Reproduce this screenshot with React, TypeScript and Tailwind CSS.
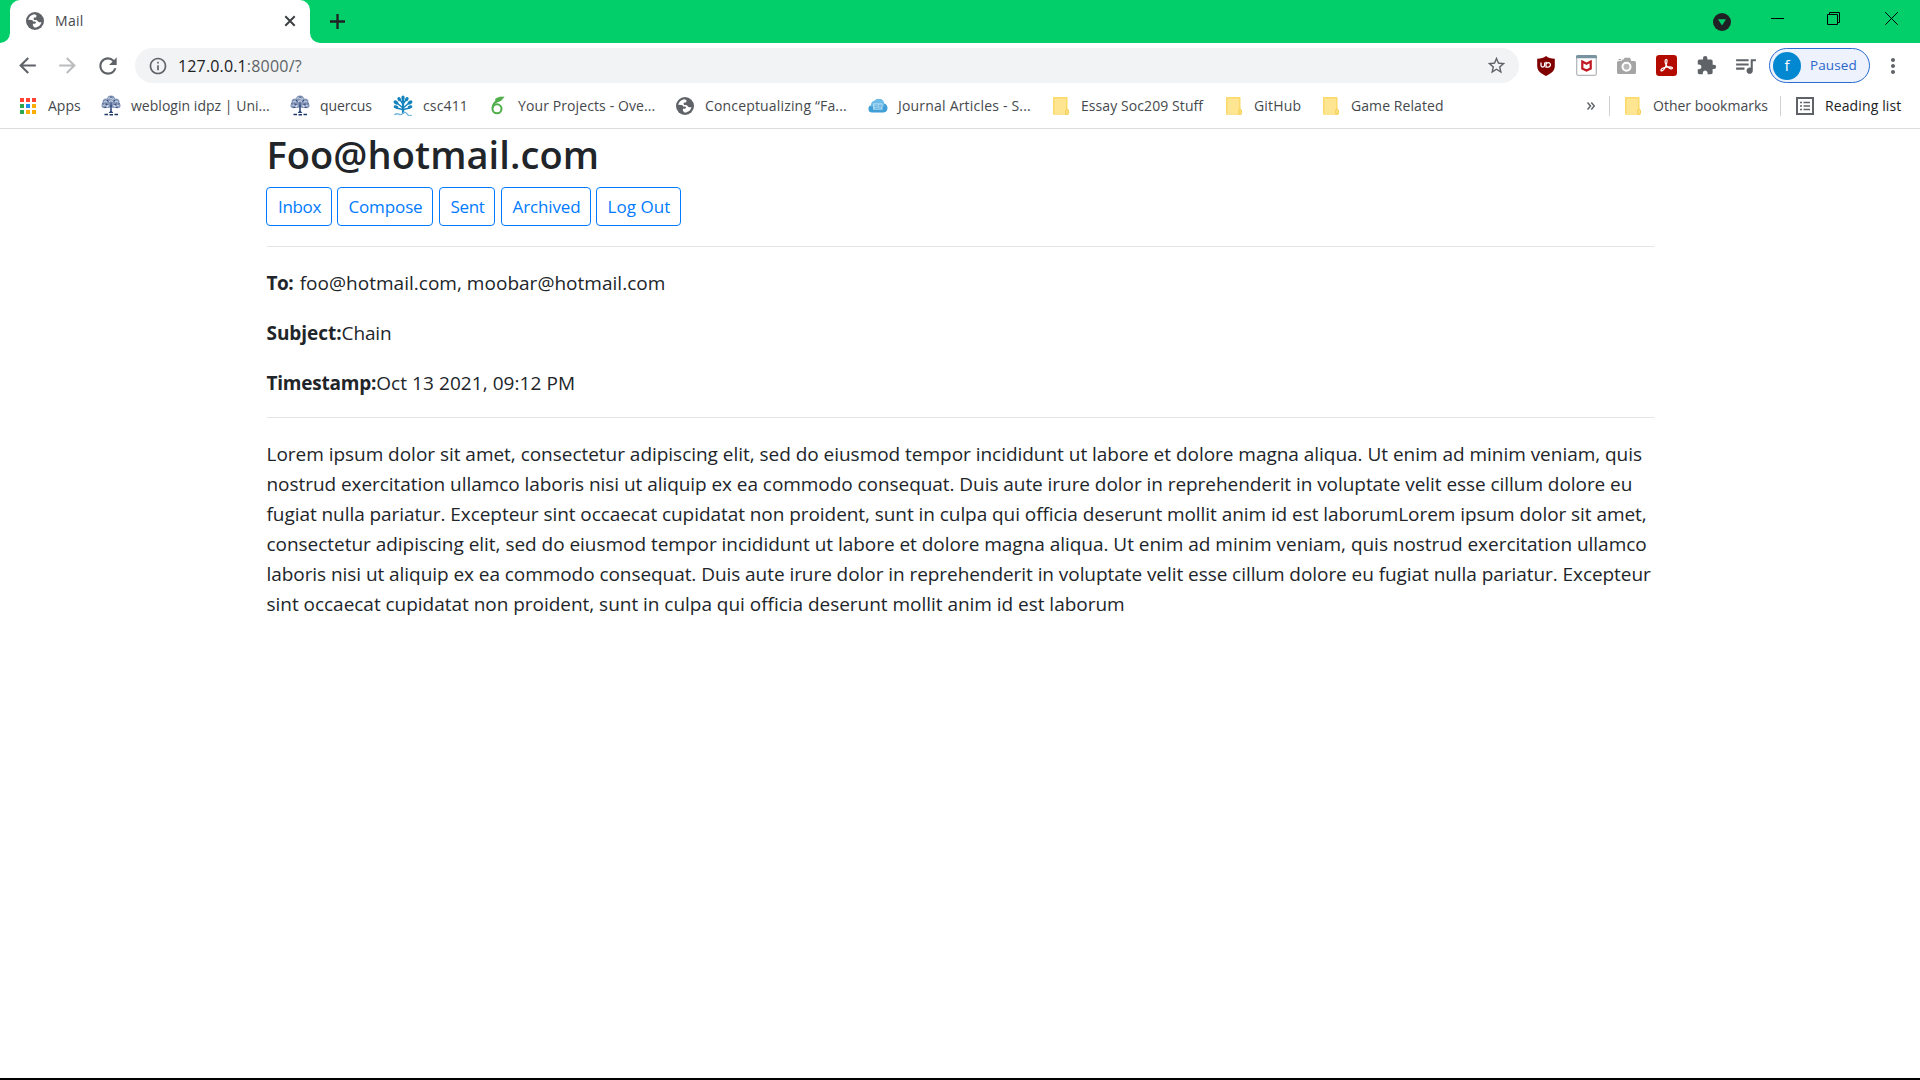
import React from "react";
import {
  MdArrowBack,
  MdArrowForward,
  MdExtension,
  MdInfoOutline,
  MdMoreVert,
  MdQueueMusic,
  MdRefresh,
  MdStarOutline,
} from "react-icons/md";

function Globe() {
  return (
    <svg width="18" height="18" viewBox="0 0 18 18">
      <circle cx="9" cy="9" r="9" fill="#5f6368" />
      <path
        d="M8.2 2.2c-3 .5-5.3 2.6-6 5.6l3.2.1c1 0 1.600.6 1.600 1.500h1.500c.9 0 1.500.5 1.500 1.200s-.6 1.200-1.500 1.200H6.900v1.900l1.500 1.700c3.500.3 6.300-2 7.100-5.200h-2.200c-.9 0-1.200-.8-1.900-1.500-.5-.5-1.400-.6-2.300-.6-.9 0-1.500-.6-1.500-1.300s.5-1.200 1.200-1.200h1.800V3.700c0-.6-.8-1.200-2.400-1.500z"
        fill="#fff"
      />
      <path d="M10.600 3.400v1.200c0 .8-.6 1.500-1.400 1.500H8v1.200h2.200c1.500 0 1.700 2 2.700 2h2.600A6.700 6.700 0 0 0 10.600 3.400z" fill="#5f6368" />
    </svg>
  );
}

function AppsGrid() {
  const colors = ["#ff4335", "#ff4335", "#ff4335", "#2aa850", "#1c8cf3", "#fbac05", "#2aa850", "#fbac05", "#fbac05"];
  return (
    <div className="grid grid-cols-[4px_4px_4px] gap-[2px]">
      {colors.map((c, i) => (
        <div key={i} className="size-[4px]" style={{ backgroundColor: c }} />
      ))}
    </div>
  );
}

function CrestTree() {
  return (
    <svg width="20" height="21" viewBox="0 0 20 21">
      <g fill="#8496b8">
        <circle cx="10" cy="4.500" r="4" />
        <circle cx="5" cy="7" r="3.500" />
        <circle cx="15" cy="7" r="3.500" />
        <circle cx="3.300" cy="10.500" r="2.800" />
        <circle cx="16.700" cy="10.500" r="2.800" />
        <circle cx="7.500" cy="10" r="3" />
        <circle cx="12.500" cy="10" r="3" />
      </g>
      <g fill="none" stroke="#e8edf5" strokeWidth=".8">
        <path d="M7 3.500q1.500-1.500 3 0t3 0M3 7q1.500-1.500 3 0M8 6.500q2-1.500 4 0M14 7q1.500-1.500 3 0M1.800 10.500q1.500-1.200 2.700 0M6 10.500q1 1 2 0M12 10.500q1 1 2 0M15.800 11q1.200-1.200 2.200 0M5 12l2-.8M13 11.200l2 .8" />
      </g>
      <g fill="none" stroke="#2a4478" strokeWidth="1">
        <path d="M6 5l1.500 1.500M10 1.500v1.300M14 5l-1.500 1.500M4.500 9l2 .5M15.500 9l-2 .5M10 7.500v3M1.500 8.500l1 .5M18.500 8.500l-1 .5M3.500 12.500h2M14.500 12.500h2" />
      </g>
      <path d="M9.300 10h1.400l.1 6 1.600 2H7.600l1.600-2z" fill="#2a4478" />
      <path d="M3.500 19.500h3.500M8.500 19.700h3.500M13.500 19.500H17" stroke="#1e3765" strokeWidth="1.600" />
    </svg>
  );
}

function BlueTree() {
  return (
    <svg width="20" height="21" viewBox="0 0 20 21">
      <g fill="none" stroke="#1683bd" strokeLinecap="round">
        <path d="M10 18V4" strokeWidth="2.200" />
        <path d="M10 13L4.500 8.500M10 13l5.500-4.500M10 9L7.500 5.500M10 9l2.500-3.500M9.500 14.500l-6-1.500M10.500 14.500l6-1.500" strokeWidth="1.500" />
      </g>
      <g fill="#1683bd">
        <ellipse cx="10" cy="3" rx="1.700" ry="2.400" />
        <ellipse cx="6.200" cy="4.200" rx="1.700" ry="2.200" transform="rotate(-30 6.200 4.200)" />
        <ellipse cx="13.800" cy="4.200" rx="1.700" ry="2.200" transform="rotate(30 13.800 4.200)" />
        <ellipse cx="3" cy="7.500" rx="1.800" ry="2.600" transform="rotate(-55 3 7.500)" />
        <ellipse cx="17" cy="7.500" rx="1.800" ry="2.600" transform="rotate(55 17 7.500)" />
        <ellipse cx="3" cy="12" rx="1.500" ry="2.400" transform="rotate(-75 3 12)" />
        <ellipse cx="17" cy="12" rx="1.500" ry="2.400" transform="rotate(75 17 12)" />
      </g>
      <path d="M1.500 20q2-2 4.200-.8T10 18.200t4.300 1T18.500 20" fill="none" stroke="#71b6d8" strokeWidth="1.400" />
    </svg>
  );
}

function Overleaf() {
  return (
    <svg width="16" height="19" viewBox="0 0 16 19" fill="none" stroke="#4fae4a">
      <circle cx="7" cy="12.800" r="4.500" strokeWidth="2" />
      <path d="M2.600 12C2.800 8 5 5.500 9 4.200" strokeWidth="2" />
      <path d="M5.200 3.200C8 .8 11 .8 14.200 1c-1.500 1-1.800 3.500-5.200 4.300-1.500.3-2.300 1-3.300 2" fill="#4fae4a" strokeWidth=".6" />
    </svg>
  );
}

function Cloud() {
  return (
    <svg width="20" height="15" viewBox="0 0 20 15">
      <path d="M4 14.500a3.700 3.700 0 0 1-.7-7.300A4 4 0 0 1 6.300 3a5.500 5.500 0 0 1 9.700 2.500c2.300.5 3.500 2.400 3.500 4.600 0 2.600-1.500 4.400-3.800 4.400z" fill="#3f9fd6" />
      <path d="M3.300 7.200A4 4 0 0 1 6.300 3a5.500 5.500 0 0 1 9.700 2.500l.3 3H2z" fill="#6bbce8" />
      <rect x="5" y="5.300" width="9.500" height="6.500" rx=".6" fill="#a9d8f2" />
      <path d="M6.500 7h3.500M6.500 8.600h3.500M6.500 10.200h6.500M11.500 7h1.700v1.600h-1.700z" stroke="#58aadb" strokeWidth=".8" fill="none" />
    </svg>
  );
}

function Folder() {
  return (
    <svg width="16" height="18" viewBox="0 0 16 18">
      <path d="M1 0h12.500a1 1 0 0 1 1 1v11l1.200 1v3.500a1 1 0 0 1-1 1.200H1a1 1 0 0 1-1-1V1a1 1 0 0 1 1-1z" fill="#fbd969" />
      <path d="M1.500 1.500h11.500V17H1.500z" fill="#fee592" />
      <path d="M12.800 17.200v-4.200q1.500-1.500 2.500 0v3.200q0 1-1 1z" fill="#fee592" stroke="#f3cb45" strokeWidth=".9" />
    </svg>
  );
}

function ReadingList() {
  return (
    <svg width="18" height="18" viewBox="0 0 18 18" fill="none" stroke="#5f6368">
      <path d="M1 1h16v16H1z" strokeWidth="2" />
      <path d="M4 5.500h2M4 9h2M4 12.500h2M7.500 5.500H14M7.500 9H14M7.500 12.500H14" strokeWidth="1.700" />
    </svg>
  );
}

function Shield() {
  return (
    <svg width="18" height="20" viewBox="0 0 18 20">
      <path d="M9 0c2.200 1.800 5 2.500 8.800 2.700v7.300c0 4.800-3.700 7.600-8.800 10C3.900 17.600.2 14.800.2 10V2.700C4 2.500 6.800 1.800 9 0z" fill="#800000" />
      <path d="M4 6.500v2.800a1.800 1.800 0 0 0 3.600 0V6.500" stroke="#fff" strokeWidth="1.300" fill="none" />
      <path d="M9 5.800v5.300h2a2.200 2.200 0 1 0-2-2.200" stroke="#fff" strokeWidth="1.300" fill="none" />
    </svg>
  );
}

function McAfee() {
  return (
    <svg width="21" height="21" viewBox="0 0 21 21">
      <rect x=".7" y=".7" width="19.600" height="19.600" rx="1.500" fill="#fff" stroke="#b4b8bb" strokeWidth="1.300" />
      <path d="M1.500 0h18a1.500 1.500 0 0 1 1.500 1.500V3.300H0V1.500A1.500 1.500 0 0 1 1.500 0z" fill="#7893a0" />
      <path d="M6.300 6.500l4.200 2.300 4.200-2.300v7l-4.200 2-4.200-2z" fill="none" stroke="#c01722" strokeWidth="2.200" />
    </svg>
  );
}

function Camera() {
  return (
    <svg width="19" height="18" viewBox="0 0 19 18">
      <path d="M1.500 4h3.300V2.500h2L7.500.8h5.500L14.200 4h3.300A1.500 1.500 0 0 1 19 5.500v10a1.500 1.500 0 0 1-1.500 1.500h-16A1.500 1.500 0 0 1 0 15.500v-10A1.500 1.500 0 0 1 1.500 4z" fill="#a5a5a5" />
      <path d="M1.500 2h2.500v1.200H1.500z" fill="#a5a5a5" />
      <circle cx="9.500" cy="9.800" r="4" fill="#b9b9b9" stroke="#fff" strokeWidth="2" />
    </svg>
  );
}

function Acrobat() {
  return (
    <svg width="21" height="21" viewBox="0 0 21 21">
      <rect width="21" height="21" rx="3.300" fill="#b30b00" />
      <path
        d="M10 4.500c1.300-.3 1.200 2 .5 4.300-.8 2.800-2.700 6.200-4.200 7-1 .5-1.800-.3-1.200-1.200.9-1.300 4.500-2.500 7.500-2.700 2.200-.1 4 .4 3.900 1.300-.2 1.100-2.400.7-4-.6-2-1.600-3.600-4.600-3.400-6.700.1-.8.4-1.300.9-1.400z"
        fill="none"
        stroke="#fff"
        strokeWidth="1.200"
      />
    </svg>
  );
}

const bookmarks = [
  { icon: <AppsGrid />, text: "Apps", width: "w-[83px]", spacing: "tracking-normal" },
  { icon: <CrestTree />, text: "weblogin idpz | Uni...", width: "w-[189px]", spacing: "tracking-[0.026px]" },
  { icon: <CrestTree />, text: "quercus", width: "w-[103px]", spacing: "tracking-[-0.120px]" },
  { icon: <BlueTree />, text: "csc411", width: "w-[95px]", spacing: "tracking-[0.150px]" },
  { icon: <Overleaf />, text: "Your Projects - Ove...", width: "w-[187px]", spacing: "tracking-[0.105px]" },
  { icon: <Globe />, text: "Conceptualizing “Fa...", width: "w-[193px]", spacing: "tracking-[0.165px]" },
  { icon: <Cloud />, text: "Journal Articles - S...", width: "w-[183px]", spacing: "tracking-[0.200px]" },
  { icon: <Folder />, text: "Essay Soc209 Stuff", width: "w-[173px]", spacing: "tracking-[0.080px]" },
  { icon: <Folder />, text: "GitHub", width: "w-[97px]", spacing: "tracking-[0.178px]" },
  { icon: <Folder />, text: "Game Related", width: "w-[130px]", spacing: "tracking-[0.080px]" },
];

const actions = [
  { text: "Inbox", style: "w-[66px] mr-[5px] tracking-[-0.350px]" },
  { text: "Compose", style: "w-[96px] mr-[6px] tracking-[-0.117px]" },
  { text: "Sent", style: "w-[56px] mr-[6px] tracking-[-0.400px]" },
  { text: "Archived", style: "w-[90px] mr-[5px] tracking-[-0.142px]" },
  { text: "Log Out", style: "w-[85px] tracking-[0.051px]" },
];

const body = [
  { text: "Lorem ipsum dolor sit amet, consectetur adipiscing elit, sed do eiusmod tempor incididunt ut labore et dolore magna aliqua. Ut enim ad minim veniam, quis", spacing: "tracking-[-0.029px]" },
  { text: "nostrud exercitation ullamco laboris nisi ut aliquip ex ea commodo consequat. Duis aute irure dolor in reprehenderit in voluptate velit esse cillum dolore eu", spacing: "tracking-[-0.056px]" },
  { text: "fugiat nulla pariatur. Excepteur sint occaecat cupidatat non proident, sunt in culpa qui officia deserunt mollit anim id est laborumLorem ipsum dolor sit amet,", spacing: "tracking-[-0.061px]" },
  { text: "consectetur adipiscing elit, sed do eiusmod tempor incididunt ut labore et dolore magna aliqua. Ut enim ad minim veniam, quis nostrud exercitation ullamco", spacing: "tracking-[-0.029px]" },
  { text: "laboris nisi ut aliquip ex ea commodo consequat. Duis aute irure dolor in reprehenderit in voluptate velit esse cillum dolore eu fugiat nulla pariatur. Excepteur", spacing: "tracking-[-0.060px]" },
  { text: "sint occaecat cupidatat non proident, sunt in culpa qui officia deserunt mollit anim id est laborum", spacing: "tracking-[-0.028px]" },
];

function TabStrip() {
  return (
    <div className="flex h-[43px] bg-[#02cf6a]">
      <div className="w-[10px] bg-white">
        <div className="h-full rounded-br-[10px] bg-[#02cf6a]" />
      </div>
      <div className="bg-[#02cf6a]">
        <div className="flex h-[43px] w-[300px] items-center rounded-t-[10px] bg-white pb-[2px] pl-[16px] pr-[14px]">
          <Globe />
          <span className="ml-[11px] text-[14px] leading-[20px] tracking-[0.300px] text-[#45494d]">Mail</span>
          <svg className="ml-auto" width="12" height="12" viewBox="0 0 12 12" stroke="#3c4043" strokeWidth="2">
            <path d="M1.300 1.300l9.400 9.400M10.700 1.300L1.300 10.700" />
          </svg>
        </div>
      </div>
      <div className="flex-1 bg-white">
        <div className="flex h-full items-center rounded-bl-[10px] bg-[#02cf6a] pl-[20px] pr-[22px]">
          <svg className="-mt-[1px]" width="15" height="15" viewBox="0 0 15 15" stroke="#202124" strokeWidth="2.300">
            <path d="M7.500 0v15M0 7.500h15" />
          </svg>
          <svg className="ml-auto" width="18" height="18" viewBox="0 0 18 18">
            <circle cx="9" cy="9" r="9" fill="#202124" />
            <path d="M5 6.200h8L9 12.500z" fill="#02cf6a" />
          </svg>
          <svg className="-mt-[6px] ml-[40px]" width="13" height="13" viewBox="0 0 13 13" stroke="#000">
            <path d="M0 6.500h13" />
          </svg>
          <svg className="-mt-[6px] ml-[43px]" width="13" height="13" viewBox="0 0 13 13" stroke="#000" fill="none">
            <path d="M.5 2.500h10v10H.5zM2.500 2.500v-2h10v10h-2" />
          </svg>
          <svg className="-mt-[6px] ml-[45px]" width="13" height="13" viewBox="0 0 13 13" stroke="#000">
            <path d="M.2.200l12.600 12.600M12.800.2L.2 12.800" />
          </svg>
        </div>
      </div>
    </div>
  );
}

function Toolbar() {
  return (
    <div className="flex h-[44px] items-center pl-[15px] pr-[15px] pt-px text-[#5f6368]">
      <MdArrowBack size={25} />
      <MdArrowForward size={25} className="ml-[15px] text-[#babcbe]" />
      <MdRefresh size={26} className="ml-[15px]" />
      <div className="ml-[14px] flex h-[35px] w-[1384px] items-center rounded-full bg-[#f1f3f4] pl-[13px] pr-[12px]">
        <MdInfoOutline size={20} />
        <span className="ml-[10px] text-[16px] leading-[22px] tracking-[0.150px] text-[#202124]">127.0.0.1</span>
        <span className="text-[16px] leading-[22px] tracking-[0.200px]">:8000/?</span>
        <MdStarOutline size={21} className="ml-auto" />
      </div>
      <div className="ml-[18px] flex items-center">
        <Shield />
        <div className="ml-[21px]"><McAfee /></div>
        <div className="ml-[20px]"><Camera /></div>
        <div className="ml-[20px]"><Acrobat /></div>
        <MdExtension size={21} className="ml-[19px]" />
        <MdQueueMusic size={25} className="ml-[16px]" />
      </div>
      <div className="ml-auto flex h-[35px] w-[101px] items-center rounded-full border border-[#2a6cd0] bg-[#edf2fc] pl-[3px]">
        <div className="flex size-7 items-center justify-center rounded-full bg-[#0288d1] text-[15px] leading-none text-white">f</div>
        <span className="mb-[2px] ml-[9px] text-[13.500px] leading-[20px] tracking-[0.100px] text-[#2a66cc]">Paused</span>
      </div>
      <MdMoreVert size={24} className="ml-[11px]" />
    </div>
  );
}

function BookmarksBar() {
  return (
    <div className="flex h-[42px] items-center whitespace-nowrap border-b border-[#dadce0] pb-[4px] pl-[18px] text-[14px] leading-[20px] text-[#45494d]">
      {bookmarks.map((b, i) => (
        <div key={i} className={`flex shrink-0 items-center gap-[10px] ${b.width}`}>
          <div className="flex w-5 shrink-0 justify-center">{b.icon}</div>
          <span className={b.spacing}>{b.text}</span>
        </div>
      ))}
      <svg className="ml-[136px]" width="8" height="8" viewBox="0 0 8 8" fill="none" stroke="#5f6368" strokeWidth="1.500">
        <path d="M.5.5L3.500 4 .5 7.500M4.300.5L7.300 4l-3 3.500" />
      </svg>
      <div className="ml-[14px] h-[20px] w-px bg-[#cfd1d4]" />
      <div className="ml-[15px]"><Folder /></div>
      <span className="ml-[12px] tracking-normal">Other bookmarks</span>
      <div className="ml-[12px] h-[20px] w-px bg-[#cfd1d4]" />
      <div className="ml-[15px]"><ReadingList /></div>
      <span className="ml-[11px] tracking-[0.123px] text-[#202124]">Reading list</span>
    </div>
  );
}

function MailPage() {
  return (
    <main className="mx-auto w-[1387px] flex-1 whitespace-nowrap text-[19px] leading-[30px] text-[#212529]">
      <h2 className="mb-[9px] pt-px text-[38px] font-semibold leading-[48px] tracking-[0.080px]">Foo@hotmail.com</h2>
      <div className="-ml-px flex">
        {actions.map((a) => (
          <button key={a.text} className={`h-[39px] rounded-[4px] border border-[#007bff] pl-[2px] text-center text-[17px] leading-[26px] text-[#007bff] ${a.style}`}>
            {a.text}
          </button>
        ))}
      </div>
      <hr className="mb-[21px] mt-5 border-[#e5e5e5]" />
      <p className="mb-5">
        <b className="tracking-[-0.500px]">To:</b>
        <span className="ml-[6.500px] tracking-[0.020px]">foo@hotmail.com, moobar@hotmail.com</span>
      </p>
      <p className="mb-5">
        <b className="tracking-[-0.050px]">Subject:</b>
        <span className="tracking-[-0.119px]">Chain</span>
      </p>
      <p>
        <b className="tracking-[-0.220px]">Timestamp:</b>
        <span className="tracking-[0.066px]">Oct 13 2021, 09:12 PM</span>
      </p>
      <hr className="mb-[21px] mt-[19px] border-[#e5e5e5]" />
      <p>
        {body.map((l, i) => (
          <span key={i} className={`block ${l.spacing}`}>{l.text}</span>
        ))}
      </p>
    </main>
  );
}

export default function App() {
  return (
    <div className="flex h-screen w-full flex-col overflow-hidden border-b-2 border-black bg-white font-['Open_Sans',sans-serif]">
      <TabStrip />
      <Toolbar />
      <BookmarksBar />
      <MailPage />
    </div>
  );
}
